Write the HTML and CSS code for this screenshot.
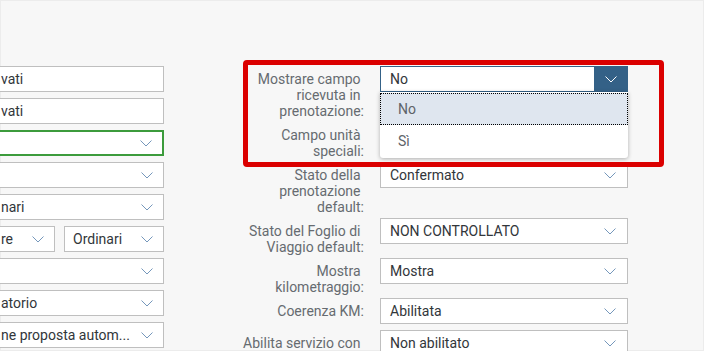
FILE: index.html
```html
<!DOCTYPE html>
<html lang="it">
<head>
  <meta charset="UTF-8" />
  <meta name="viewport" content="width=device-width, initial-scale=1.0"/>
  <title>Impostazioni prenotazione</title>
  <link rel="stylesheet" href="styles.css">
</head>
<body>
  <div class="page">
    <div class="left">
      <div class="field">vati</div>
      <div class="field">vati</div>
      <div class="field select valid"><span></span><svg class="chev" viewBox="0 0 12 7"><polyline points="0.5,0.5 6,6 11.5,0.5"/></svg></div>
      <div class="field select"><span></span><svg class="chev" viewBox="0 0 12 7"><polyline points="0.5,0.5 6,6 11.5,0.5"/></svg></div>
      <div class="field select"><span>nari</span><svg class="chev" viewBox="0 0 12 7"><polyline points="0.5,0.5 6,6 11.5,0.5"/></svg></div>
      <div class="split">
        <div class="field select short"><span>re</span><svg class="chev" viewBox="0 0 12 7"><polyline points="0.5,0.5 6,6 11.5,0.5"/></svg></div>
        <div class="field select boxed"><span>Ordinari</span><svg class="chev" viewBox="0 0 12 7"><polyline points="0.5,0.5 6,6 11.5,0.5"/></svg></div>
      </div>
      <div class="field select"><span></span><svg class="chev" viewBox="0 0 12 7"><polyline points="0.5,0.5 6,6 11.5,0.5"/></svg></div>
      <div class="field select"><span>atorio</span><svg class="chev" viewBox="0 0 12 7"><polyline points="0.5,0.5 6,6 11.5,0.5"/></svg></div>
      <div class="field select"><span>ne proposta autom...</span><svg class="chev" viewBox="0 0 12 7"><polyline points="0.5,0.5 6,6 11.5,0.5"/></svg></div>
    </div>

    <div class="right">
      <div class="row">
        <label>Mostrare campo&nbsp;<br>ricevuta in&nbsp;<br>prenotazione:</label>
        <div class="combo open">
          <div class="combo-box">
            <span>No</span>
            <span class="combo-btn"><svg class="chev" viewBox="0 0 12 7"><polyline points="0.5,0.5 6,6 11.5,0.5"/></svg></span>
          </div>
          <ul class="list">
            <li class="active">No</li>
            <li>Sì</li>
          </ul>
        </div>
      </div>
      <div class="row">
        <label>Campo unità&nbsp;<br>speciali:</label>
        <div class="combo"><div class="combo-box"><span></span><svg class="chev" viewBox="0 0 12 7"><polyline points="0.5,0.5 6,6 11.5,0.5"/></svg></div></div>
      </div>
      <div class="row">
        <label>Stato della&nbsp;<br>prenotazione&nbsp;<br>default:</label>
        <div class="combo"><div class="combo-box"><span>Confermato</span><svg class="chev" viewBox="0 0 12 7"><polyline points="0.5,0.5 6,6 11.5,0.5"/></svg></div></div>
      </div>
      <div class="row">
        <label>Stato del Foglio di&nbsp;<br>Viaggio default:</label>
        <div class="combo"><div class="combo-box"><span>NON CONTROLLATO</span><svg class="chev" viewBox="0 0 12 7"><polyline points="0.5,0.5 6,6 11.5,0.5"/></svg></div></div>
      </div>
      <div class="row">
        <label>Mostra&nbsp;<br>kilometraggio:</label>
        <div class="combo"><div class="combo-box"><span>Mostra</span><svg class="chev" viewBox="0 0 12 7"><polyline points="0.5,0.5 6,6 11.5,0.5"/></svg></div></div>
      </div>
      <div class="row">
        <label>Coerenza KM:</label>
        <div class="combo"><div class="combo-box"><span>Abilitata</span><svg class="chev" viewBox="0 0 12 7"><polyline points="0.5,0.5 6,6 11.5,0.5"/></svg></div></div>
      </div>
      <div class="row">
        <label>Abilita servizio con&nbsp;</label>
        <div class="combo"><div class="combo-box"><span>Non abilitato</span><svg class="chev" viewBox="0 0 12 7"><polyline points="0.5,0.5 6,6 11.5,0.5"/></svg></div></div>
      </div>

      <div class="highlight"></div>
    </div>
  </div>
</body>
</html>
```

FILE: styles.css
```css
* { margin: 0; padding: 0; box-sizing: border-box; }
html, body { height: 100%; }
body {
  font-family: Roboto, "Noto Sans", sans-serif;
  font-size: 14px;
  color: #32363a;
  background: #f7f7f7;
  overflow: hidden;
  box-shadow: inset 0 0 0 1px #ececec;
}
.page {
  display: flex;
  align-items: flex-start;
  padding-top: 66px;
}

/* left column, clipped by the window edge */
.left {
  width: 164px;
  display: flex;
  flex-direction: column;
  gap: 6px;
  flex-shrink: 0;
}
.field {
  height: 26px;
  background: #fff;
  border: 1px solid #bfbfbf;
  border-left: none;
  display: flex;
  align-items: center;
  padding-left: 1px;
  line-height: 16px;
  white-space: nowrap;
  overflow: hidden;
}
.field.select span { flex: 1; }
.field.valid { border: 2px solid #3c9b3c; border-left: none; }
.split {
  display: flex;
  gap: 9px;
}
.split .short { width: 55px; }
.split .boxed { flex: 1; border-left: 1px solid #bfbfbf; padding-left: 8px; }

.chev {
  width: 12px;
  height: 7px;
  fill: none;
  stroke: #7597bb;
  stroke-width: 1;
  margin-right: 10px;
  flex-shrink: 0;
}

/* right column */
.right {
  position: relative;
}
.row {
  display: grid;
  grid-template-columns: 200px 248px;
  column-gap: 16px;
  min-height: 32px;
  align-items: start;
}
.row label {
  text-align: right;
  color: #666b70;
  line-height: 16px;
  padding-top: 5px;
  padding-bottom: 3px;
  white-space: nowrap;
}
.combo { position: relative; }
.combo-box {
  height: 26px;
  background: #fff;
  border: 1px solid #bfbfbf;
  display: flex;
  align-items: center;
  padding-left: 9px;
  white-space: nowrap;
}
.combo-box span:first-child { flex: 1; }
.combo-box .chev { margin-right: 11px; }

.open .combo-box {
  border-color: #346187;
  padding-right: 0;
}
.combo-btn {
  width: 33px;
  align-self: stretch;
  background: #346187;
  display: flex;
  align-items: center;
  justify-content: center;
}
.combo-btn .chev { stroke: #fff; margin: 0; }

.list {
  position: absolute;
  top: 26px;
  left: 0;
  width: 248px;
  list-style: none;
  background: #fff;
  box-shadow: 0 1px 4px rgba(0, 0, 0, 0.3);
  border-radius: 0 0 3px 3px;
  padding: 1px 0 1px;
  z-index: 2;
}
.list li {
  height: 32px;
  line-height: 30px;
  padding-left: 17px;
  color: #5e6368;
  border: 1px solid transparent;
}
.list li.active {
  background: #dfe6ef;
  border: 1px dotted #000;
}

/* red annotation frame */
.highlight {
  position: absolute;
  top: -6px;
  left: 79px;
  width: 421px;
  height: 107px;
  border: 5px solid #db0000;
  border-radius: 4px;
  z-index: 3;
  pointer-events: none;
}
```
